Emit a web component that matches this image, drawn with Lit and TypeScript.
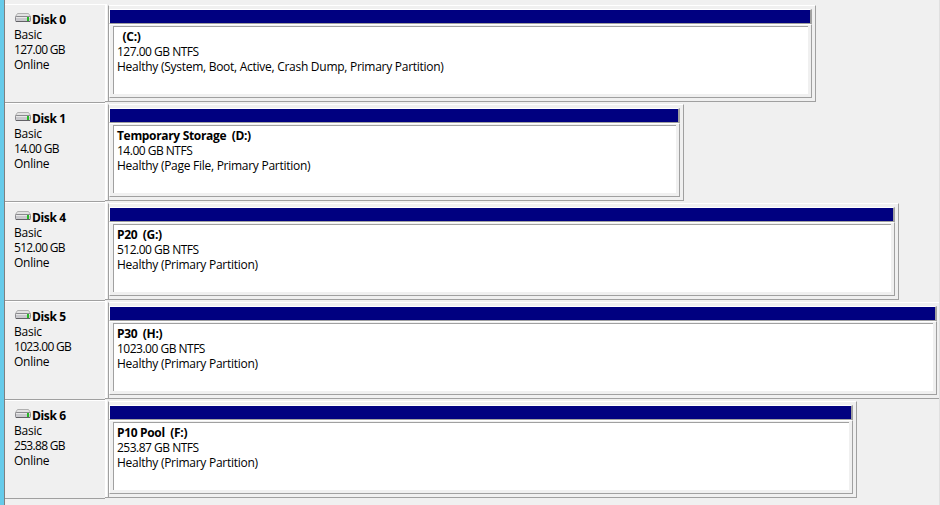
import { LitElement, html, css, svg } from "lit";
import { customElement, property } from "lit/decorators.js";

interface Disk {
  name: string;
  capacity: string;
  volume: string;
  size: string;
  health: string;
  width: number;
}

const DISKS: Disk[] = [
  { name: "Disk 0", capacity: "127.00 GB", volume: "  (C:)", size: "127.00 GB NTFS", health: "Healthy (System, Boot, Active, Crash Dump, Primary Partition)", width: 708 },
  { name: "Disk 1", capacity: "14.00 GB", volume: "Temporary Storage  (D:)", size: "14.00 GB NTFS", health: "Healthy (Page File, Primary Partition)", width: 576 },
  { name: "Disk 4", capacity: "512.00 GB", volume: "P20  (G:)", size: "512.00 GB NTFS", health: "Healthy (Primary Partition)", width: 791 },
  { name: "Disk 5", capacity: "1023.00 GB", volume: "P30  (H:)", size: "1023.00 GB NTFS", health: "Healthy (Primary Partition)", width: 833 },
  { name: "Disk 6", capacity: "253.88 GB", volume: "P10 Pool  (F:)", size: "253.87 GB NTFS", health: "Healthy (Primary Partition)", width: 749 },
];

@customElement("disk-row")
export class DiskRow extends LitElement {
  @property({ attribute: false }) disk!: Disk;

  static styles = css`
    :host { display: flex; height: 99px; box-sizing: border-box; }
    * { box-sizing: border-box; }
    .label {
      width: 100px; height: 99px; flex: none;
      border-top: 1px solid #fff; border-bottom: 1px solid #a0a0a0;
      padding: 7px 0 0 9px;
    }
    .gap { width: 3px; flex: none; height: 98px; border-bottom: 1px solid #a0a0a0; display: flex; }
    .gap::before { content: ""; width: 2px; background: #fff; }
    .line { height: 15px; line-height: 15px; white-space: pre; }
    .title { display: flex; font-weight: 700; letter-spacing: -0.35px; }
    .title svg { flex: none; margin: 0 1px 0 0; }
    .capacity { letter-spacing: -0.68px; }
    .size { letter-spacing: -0.5px; }
    .health { letter-spacing: -0.27px; }
    .outer {
      flex: none; height: 97px; margin-top: 1px; background: #f0f0f0;
      border: 1px solid #a0a0a0; border-top-color: #fff;
      padding: 3px 3px 3px 0;
    }
    .bar { height: 15px; border-top: 1px solid #fff; border-left: 1px solid #fff; border-right: 2px solid #a0a0a0; border-bottom: 1px solid #a0a0a0; background: #000080; }
    .frame { height: 74px; border-top: 1px solid #fff; border-right: 1px solid #a0a0a0; border-bottom: 1px solid #a0a0a0; border-left: 1px solid #fff; padding: 1px 3px 3px; }
    .body { height: 68px; background: #fff; border-top: 1px solid #a0a0a0; border-left: 1px solid #a0a0a0; padding: 2px 0 0 3px; }
    .volume { font-weight: 700; letter-spacing: -0.33px; }
  `;

  private icon() {
    return svg`<svg width="17" height="13" viewBox="0 0 17 13">
      <path d="M3.5 1.5H14.5L16.5 4.5H1.5Z" fill="#e2e2e2" stroke="#b0b0b0"/>
      <rect x="1.5" y="4.5" width="15" height="5" rx="0.8" fill="#c9c9cd" stroke="#8a8a8e"/>
      <path d="M2 9.5H16" stroke="#626266"/>
      <path d="M2 5.5H16" stroke="#e8e8e8"/>
      <rect x="13" y="5" width="2" height="4" fill="#26b826"/>
    </svg>`;
  }

  render() {
    const d = this.disk;
    return html`
      <div class="label">
        <div class="line title">${this.icon()}<span>${d.name}</span></div>
        <div class="line">Basic</div>
        <div class="line capacity">${d.capacity}</div>
        <div class="line">Online</div>
      </div>
      <div class="gap"></div>
      <div class="outer" style="width:${d.width}px">
        <div class="bar"></div>
        <div class="frame">
          <div class="body">
            <div class="line volume">${d.volume}</div>
            <div class="line size">${d.size}</div>
            <div class="line health">${d.health}</div>
          </div>
        </div>
      </div>`;
  }
}

@customElement("app-root")
export class AppRoot extends LitElement {
  static styles = css`
    :host {
      display: block; box-sizing: border-box; width: 940px; height: 505px; overflow: hidden;
      background: #f0f0f0; border-left: 4px solid #66cbea; border-right: 1px solid #e0e0e0; color: #000;
      font: 12px "Open Sans", "Noto Sans", sans-serif; letter-spacing: -0.25px;
    }
    .list { height: 505px; border-left: 1px solid #808080; padding-top: 4px; box-sizing: border-box; }
  `;

  render() {
    return html`<div class="list">${DISKS.map((d) => html`<disk-row .disk=${d}></disk-row>`)}</div>`;
  }
}
